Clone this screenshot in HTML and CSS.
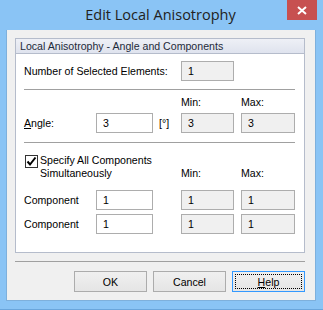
FILE: index.html
```html
<!DOCTYPE html>
<html lang="en">
<head>
    <meta charset="UTF-8">
    <link rel="stylesheet" href="styles.css">
    <title>Edit Local Anisotrophy</title>
</head>
<body>
    <div class="window">
        <div class="titleBar">
            <span class="spacer"></span>
            <span class="title">Edit Local Anisotrophy</span>
            <span class="closeBtn">
                <svg width="10" height="9" viewBox="0 0 10 9">
                    <path d="M1 1 L9 8 M9 1 L1 8" stroke="#fff" stroke-width="2"/>
                </svg>
            </span>
        </div>

        <div class="client">
            <div class="groupBox">
                <div class="groupHeader">Local Anisotrophy - Angle and Components</div>
                <div class="groupBody">
                    <div class="grid countRow">
                        <span class="label wide">Number of Selected Elements:</span>
                        <span class="field readonly">1</span>
                    </div>

                    <div class="separator"></div>

                    <div class="grid headRow">
                        <span class="colMin">Min:</span>
                        <span class="colMax">Max:</span>
                    </div>
                    <div class="grid fieldRow">
                        <span class="label"><u>A</u>ngle:</span>
                        <span class="field">3</span>
                        <span class="unit">[°]</span>
                        <span class="field readonly">3</span>
                        <span class="field readonly">3</span>
                    </div>

                    <div class="separator sepLower"></div>

                    <div class="grid checkRow">
                        <label class="check">
                            <span class="box">
                                <svg width="11" height="11" viewBox="0 0 11 11">
                                    <path d="M1.5 5.5 L4 8.5 L9.5 1.5" stroke="#000" stroke-width="2" fill="none"/>
                                </svg>
                            </span>
                            <span>Specify All Components<br>Simultaneously</span>
                        </label>
                        <span class="colMin">Min:</span>
                        <span class="colMax">Max:</span>
                    </div>
                    <div class="grid fieldRow compRow">
                        <span class="label">Component</span>
                        <span class="field">1</span>
                        <span></span>
                        <span class="field readonly">1</span>
                        <span class="field readonly">1</span>
                    </div>
                    <div class="grid fieldRow compRow2">
                        <span class="label">Component</span>
                        <span class="field">1</span>
                        <span></span>
                        <span class="field readonly">1</span>
                        <span class="field readonly">1</span>
                    </div>
                </div>
            </div>

            <div class="separator bottomSep"></div>

            <div class="buttons">
                <button class="btn">OK</button>
                <button class="btn">Cancel</button>
                <button class="btn focused"><span class="focusRing"><u>H</u>elp</span></button>
            </div>
        </div>
    </div>
</body>
</html>
```

FILE: styles.css
```css
:root {
    --frame: #8ac4f5;
    --frame-edge: #6aa6dc;
    --face: #f0f0f0;
    --field-border: #adadad;
    --sep: #a0a0a0;
}

body {
    margin: 0;
    background-color: var(--frame);
    font-family: 'Liberation Sans', Arial, sans-serif;
    font-size: 10.6px;
    color: #000;
}

.window {
    width: 323px;
    height: 310px;
    box-sizing: border-box;
    border-bottom: 1px solid var(--frame-edge);
    padding: 0 7px 8px 6px;
    display: flex;
    flex-direction: column;
}

.titleBar {
    height: 30px;
    display: grid;
    grid-template-columns: 30px 1fr 30px;
    align-items: start;
    margin-right: -1px;
}

.title {
    text-align: center;
    font-family: 'Open Sans', sans-serif;
    font-size: 14.5px;
    color: #222;
    line-height: 16px;
    padding-top: 7px;
    padding-right: 2px;
}

.closeBtn {
    height: 20px;
    background-color: #c75050;
    display: flex;
    align-items: center;
    justify-content: center;
}

.client {
    flex: 1;
    background-color: var(--face);
    border: 1px solid #7eb0dc;
    border-top: none;
    padding: 8px 10px 0 8px;
}

.groupBox {
    border: 1px solid #b5bccb;
    background-color: #fff;
}

.groupHeader {
    height: 14px;
    line-height: 14px;
    padding-left: 4px;
    background: linear-gradient(#eef0f6, #dfe3ee);
    border-bottom: 1px solid #b5bccb;
    color: #1e2a3a;
    font-size: 10.6px;
}

.groupBody {
    padding: 7px 9px 18px 8px;
}

.grid {
    display: grid;
    grid-template-columns: 65px 57px 14px 53px 54px;
    column-gap: 7px;
    align-items: center;
}

.label {
    white-space: nowrap;
}

.field {
    height: 20px;
    box-sizing: border-box;
    border: 1px solid var(--field-border);
    background-color: #fff;
    padding-left: 6px;
    line-height: 18px;
}

.readonly {
    background-color: var(--face);
}

.countRow .wide {
    grid-column: 1 / 4;
}

.countRow .field {
    grid-column: 4;
}

.separator {
    height: 1px;
    background-color: var(--sep);
    margin-top: 8px;
}

.headRow {
    margin-top: 5px;
    height: 14px;
}

.colMin {
    grid-column: 4;
}

.colMax {
    grid-column: 5;
}

.fieldRow {
    margin-top: 4px;
}

.unit {
    margin-left: -1px;
}

.sepLower {
    margin-top: 9px;
}

.checkRow {
    margin-top: 11px;
    align-items: end;
    line-height: 13px;
}

.check {
    grid-column: 1 / 4;
    display: flex;
    align-items: flex-start;
    gap: 2px;
    padding-left: 1px;
    white-space: nowrap;
}

.box {
    width: 13px;
    height: 13px;
    box-sizing: border-box;
    border: 1px solid #333;
    background-color: #fff;
    display: flex;
    align-items: center;
    justify-content: center;
    margin-top: 1px;
    flex-shrink: 0;
}

.compRow {
    margin-top: 10px;
}

.bottomSep {
    margin-top: 8px;
    margin-right: 0;
}

.buttons {
    display: flex;
    justify-content: flex-end;
    gap: 6px;
    margin-top: 9px;
}

.btn {
    width: 73px;
    height: 21px;
    padding: 0;
    font-family: inherit;
    font-size: 10.6px;
    color: #000;
    border: 1px solid #acacac;
    background: linear-gradient(#f0f0f0, #e5e5e5);
}

.focused {
    border-color: #3399ff;
    padding: 2px;
}

.focusRing {
    display: block;
    height: 100%;
    box-sizing: border-box;
    border: 1px dotted #000;
    line-height: 15px;
}
```
